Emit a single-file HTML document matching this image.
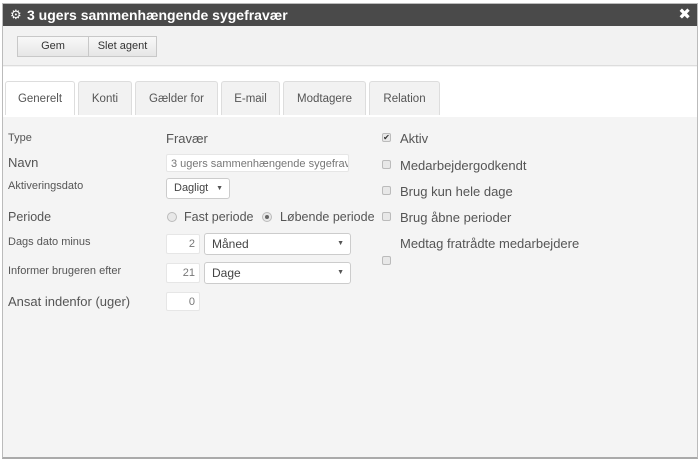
<!DOCTYPE html>
<html><head><meta charset="utf-8"><style>
*{box-sizing:border-box;margin:0;padding:0}
body{width:700px;height:460px;background:#fff;font-family:"Liberation Sans","DejaVu Sans",sans-serif;position:relative;overflow:hidden;color:#333}
.frame{position:absolute;left:2px;top:3px;width:696px;height:456px;border:1px solid #bbb;border-bottom:2px solid #aaa;background:#f4f4f4}
.title{position:absolute;left:0;top:0;width:694px;height:22px;background:#4a4a4a;color:#fff;font-weight:bold;font-size:14px;line-height:22px;padding-left:24px}
.gear{position:absolute;left:7px;top:0;font-size:13px}
.x{position:absolute;right:6px;top:0;font-size:15px}
.tool{position:absolute;left:0;top:22px;width:694px;height:40px;background:#f2f2f2;border-bottom:1px solid #ddd}
.btn{position:absolute;top:11px;height:21px;border:1px solid #c8c8c8;background:linear-gradient(#f8f8f8,#e6e6e6);font-size:11px;line-height:19px;text-align:center;color:#333}
.white{position:absolute;left:0;top:63px;width:694px;height:50px;background:#fff}
.tab{position:absolute;top:81px;height:34px;border:1px solid #ddd;border-bottom:none;border-radius:3px 3px 0 0;background:#f2f2f2;font-size:11.5px;color:#555;text-align:center;line-height:34px}
.tab.a{background:#fff}
.abs{position:absolute;font-size:13px;color:#555;white-space:nowrap}
.sm{font-size:11px}
.inp{position:absolute;background:#fff;border:1px solid #e6e6e6;font-size:11px;color:#777;line-height:18px;border-radius:2px}
.sel{position:absolute;background:#fff;border:1px solid #ccc;border-radius:3px;font-size:12px;color:#444;padding-left:7px}
.sel:after{content:"▼";position:absolute;right:6px;font-size:7px;color:#555}
.cb{position:absolute;width:9px;height:9px;border:1px solid #bbb;border-radius:2px;background:#e8e8e8}
.rad{position:absolute;width:10px;height:10px;border:1px solid #bbb;border-radius:50%;background:#e8e8e8}
</style></head><body>
<div class="frame">
<div class="title"><span class="gear">⚙</span>3 ugers sammenhængende sygefravær<span class="x">✖</span></div>
<div class="tool"></div>
<div class="white"></div>
</div>
<div class="btn" style="left:17px;top:36px;width:72px">Gem</div>
<div class="btn" style="left:88px;top:36px;width:69px">Slet agent</div>
<div class="tab a" style="left:5px;width:70px">Generelt</div>
<div class="tab" style="left:78px;width:54px">Konti</div>
<div class="tab" style="left:135px;width:83px">Gælder for</div>
<div class="tab" style="left:221px;width:59px">E-mail</div>
<div class="tab" style="left:283px;width:83px">Modtagere</div>
<div class="tab" style="left:369px;width:71px">Relation</div>

<div class="abs sm" style="left:8px;top:132px">Type</div>
<div class="abs" style="left:166px;top:131px">Fravær</div>
<div class="abs" style="left:8px;top:155px">Navn</div>
<div class="inp" style="left:166px;top:154px;width:183px;height:18px;padding-left:4px;overflow:hidden;white-space:nowrap">3 ugers sammenhængende sygefravær</div>
<div class="abs sm" style="left:8px;top:180px">Aktiveringsdato</div>
<div class="sel" style="left:166px;top:178px;width:64px;height:21px;line-height:19px;font-size:11px">Dagligt</div>
<div class="abs" style="left:8px;top:210px;font-size:12.5px">Periode</div>
<div class="rad" style="left:167px;top:212px"></div>
<div class="abs" style="left:184px;top:210px;font-size:12.5px">Fast periode</div>
<div class="rad" style="left:262px;top:212px"><div style="width:4px;height:4px;border-radius:50%;background:#666;margin:2px"></div></div>
<div class="abs" style="left:280px;top:210px;font-size:12.5px">Løbende periode</div>
<div class="abs sm" style="left:8px;top:236px">Dags dato minus</div>
<div class="inp" style="left:166px;top:234px;width:34px;height:20px;text-align:right;padding-right:4px">2</div>
<div class="sel" style="left:204px;top:233px;width:147px;height:22px;line-height:20px">Måned</div>
<div class="abs sm" style="left:8px;top:265px">Informer brugeren efter</div>
<div class="inp" style="left:166px;top:263px;width:34px;height:20px;text-align:right;padding-right:4px">21</div>
<div class="sel" style="left:204px;top:262px;width:147px;height:22px;line-height:20px">Dage</div>
<div class="abs" style="left:8px;top:294px">Ansat indenfor (uger)</div>
<div class="inp" style="left:166px;top:292px;width:34px;height:19px;text-align:right;padding-right:4px">0</div>

<div class="cb" style="left:382px;top:133px;font-size:8px;line-height:7px;text-align:center;color:#333">✔</div>
<div class="abs" style="left:400px;top:131px">Aktiv</div>
<div class="cb" style="left:382px;top:160px"></div>
<div class="abs" style="left:400px;top:158px">Medarbejdergodkendt</div>
<div class="cb" style="left:382px;top:186px"></div>
<div class="abs" style="left:400px;top:184px">Brug kun hele dage</div>
<div class="cb" style="left:382px;top:212px"></div>
<div class="abs" style="left:400px;top:210px">Brug åbne perioder</div>
<div class="abs" style="left:400px;top:236px">Medtag fratrådte medarbejdere</div>
<div class="cb" style="left:382px;top:256px"></div>
</body></html>
